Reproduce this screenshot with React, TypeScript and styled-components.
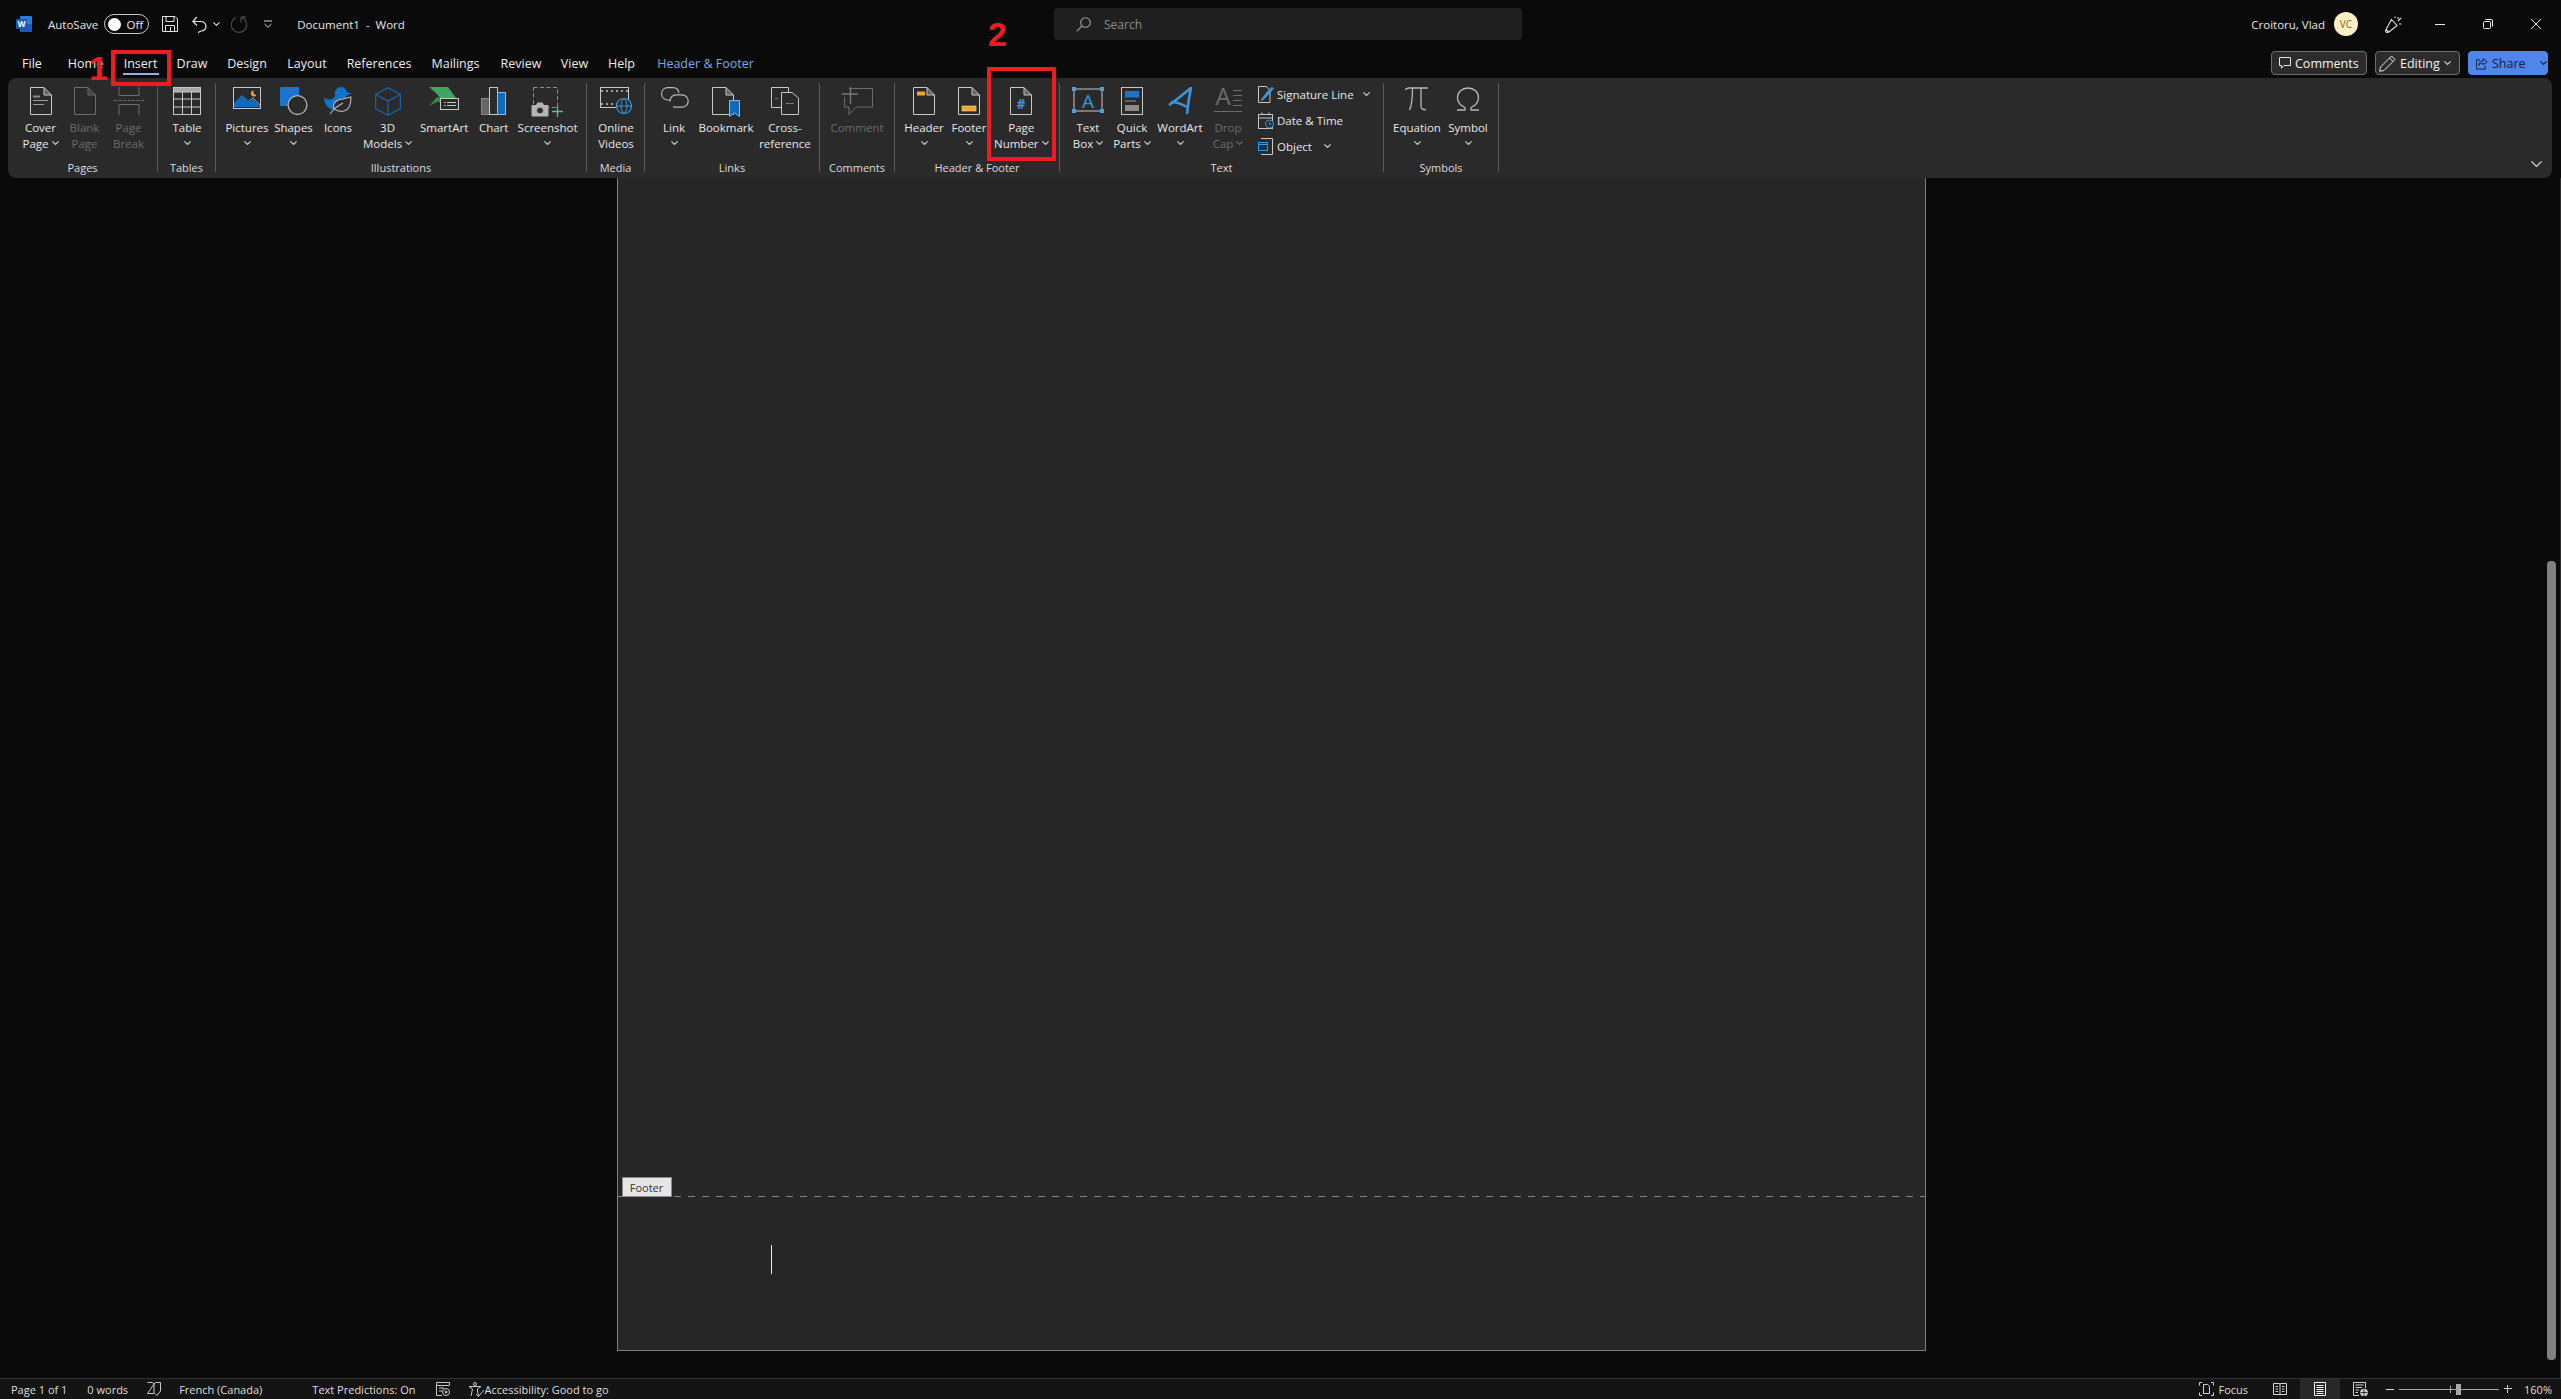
import React from 'react'
import styled, { createGlobalStyle } from 'styled-components'

const GlobalStyle = createGlobalStyle`
	html, body {
		margin: 0;
		padding: 0;
		background: #0a0a0a;
	}
	* {
		box-sizing: border-box;
	}
	svg {
		display: block;
		flex: none;
	}
`

const Window = styled.div`
	position: relative;
	display: flex;
	flex-direction: column;
	width: 2561px;
	height: 1399px;
	overflow: hidden;
	background: #0a0a0a;
	color: #e8e8e8;
	font-family: 'Open Sans', 'Noto Sans', sans-serif;
	font-size: 11.5px;
`

const TitleBar = styled.div`
	display: flex;
	align-items: center;
	flex: 0 0 48px;
	height: 48px;
	padding-right: 20px;
`

const QuickAccess = styled.div`
	display: flex;
	align-items: center;
	flex: 0 0 1054px;
	padding-left: 16px;
`

const Gap = styled.span<{ $w: number }>`
	display: block;
	flex: 0 0 ${(p) => p.$w}px;
`

const TitleText = styled.span`
	font-size: 11.5px;
	color: #e6e6e6;
	white-space: pre;
`

const Toggle = styled.div`
	display: flex;
	align-items: center;
	justify-content: space-between;
	width: 45px;
	height: 20px;
	padding: 0 5px 0 3px;
	border: 1px solid #c8c8c8;
	border-radius: 10px;
	font-size: 11.5px;
`

const ToggleKnob = styled.span`
	display: block;
	width: 13px;
	height: 13px;
	border-radius: 50%;
	background: #fff;
`

const SearchBox = styled.div`
	display: flex;
	align-items: center;
	gap: 13px;
	width: 468px;
	height: 32px;
	padding-left: 22px;
	border-radius: 4px;
	background: #1f1f1f;
	color: #8c8c8c;
	font-size: 12px;
`

const AccountArea = styled.div`
	display: flex;
	align-items: center;
	margin-left: auto;
`

const Avatar = styled.div`
	display: flex;
	align-items: center;
	justify-content: center;
	width: 24px;
	height: 24px;
	border-radius: 50%;
	background: #fdeec6;
	color: #8a6a14;
	font-size: 10px;
`

const TabRow = styled.div`
	display: flex;
	align-items: center;
	flex: 0 0 30px;
	height: 30px;
	padding: 0 13px 0 10px;
`

const Tab = styled.div<{ $w: number; $active?: boolean; $accent?: boolean }>`
	position: relative;
	display: flex;
	align-items: center;
	justify-content: center;
	flex: 0 0 ${(p) => p.$w}px;
	height: 30px;
	font-size: 12.5px;
	color: ${(p) => (p.$accent ? '#7ea6ea' : '#ececec')};
	white-space: nowrap;

	&::after {
		content: '';
		display: ${(p) => (p.$active ? 'block' : 'none')};
		position: absolute;
		left: 6px;
		right: 5px;
		bottom: 3px;
		height: 2px;
		background: #8fb0ea;
	}
`

const TabActions = styled.div`
	display: flex;
	align-items: center;
	gap: 8px;
	margin-left: auto;
`

const ActionButton = styled.div<{ $w: number; $pad: number; $primary?: boolean }>`
	display: flex;
	align-items: center;
	gap: 4px;
	width: ${(p) => p.$w}px;
	height: 24px;
	padding-left: ${(p) => p.$pad}px;
	border: 1px solid ${(p) => (p.$primary ? '#4f86e8' : '#6e6e6e')};
	border-radius: 4px;
	background: ${(p) => (p.$primary ? '#4f86e8' : '#2b2b2b')};
	color: ${(p) => (p.$primary ? '#10203f' : '#f4f4f4')};
	font-size: 12.5px;
`

const Ribbon = styled.div`
	position: relative;
	display: flex;
	flex: 0 0 100px;
	height: 100px;
	margin: 0 9px 0 8px;
	padding-top: 5px;
	border-radius: 8px;
	background: #2a2a2a;
`

const Group = styled.div<{ $w: number; $pad: number }>`
	display: flex;
	flex-direction: column;
	flex: 0 0 ${(p) => p.$w}px;
	height: 89px;
	padding-left: ${(p) => p.$pad}px;
	border-right: 1px solid #5a5a5a;
`

const GroupBody = styled.div`
	display: flex;
	flex: 0 0 77px;
	height: 77px;
`

const GroupLabel = styled.div<{ $pad: number }>`
	margin-left: -${(p) => p.$pad}px;
	line-height: 15px;
	text-align: center;
	font-size: 11px;
	color: #dcdcdc;
	white-space: nowrap;
`

const Btn = styled.div<{ $w: number; $disabled?: boolean }>`
	display: flex;
	flex-direction: column;
	align-items: center;
	flex: 0 0 ${(p) => p.$w}px;
	padding-top: 4px;
	color: ${(p) => (p.$disabled ? '#6c6c6c' : '#e8e8e8')};
`

const IconSlot = styled.div`
	display: flex;
	align-items: flex-start;
	justify-content: center;
	height: 29px;
	margin-bottom: 3px;
`

const BtnLine = styled.div`
	display: flex;
	align-items: center;
	justify-content: center;
	gap: 3px;
	height: 16px;
	white-space: nowrap;
`

const SmallStack = styled.div`
	display: flex;
	flex-direction: column;
	margin-top: -2px;
	margin-left: 6px;
`

const SmallRow = styled.div<{ $w: number }>`
	display: flex;
	align-items: center;
	gap: 3px;
	width: ${(p) => p.$w}px;
	height: 26px;
	white-space: nowrap;
`

const SmallChevron = styled.span<{ $gap: number }>`
	display: block;
	margin-left: ${(p) => p.$gap}px;
`

const Collapse = styled.div`
	position: absolute;
	right: 10px;
	bottom: 11px;
`

const DocArea = styled.div`
	position: relative;
	display: flex;
	justify-content: center;
	flex: 1;
	min-height: 0;
	padding: 0 19px 27px 0;
`

const Page = styled.div`
	display: flex;
	flex-direction: column;
	justify-content: flex-end;
	width: 1309px;
	border: 1px solid #7e7e7e;
	border-top: none;
	background: #262626;
`

const FooterZone = styled.div`
	position: relative;
	height: 154px;
	padding: 49px 0 0 153px;
	background: repeating-linear-gradient(90deg, #858585 0 7px, transparent 7px 14px) top / 100% 1px no-repeat;
`

const FooterTag = styled.div`
	position: absolute;
	left: 4px;
	top: -19px;
	display: flex;
	align-items: center;
	justify-content: center;
	width: 50px;
	height: 20px;
	border: 1px solid #8a8a8a;
	background: #e6e6e6;
	color: #333;
	font-size: 11px;
`

const Caret = styled.div`
	width: 1px;
	height: 29px;
	background: #e8e8e8;
`

const ScrollThumb = styled.div`
	position: absolute;
	right: 5px;
	top: 383px;
	width: 9px;
	height: 799px;
	border-radius: 4px;
	background: #808080;
`

const ScrollEdge = styled.div`
	position: absolute;
	right: 0;
	top: 0;
	bottom: 0;
	width: 1px;
	background: #2e2e2e;
`

const StatusBar = styled.div`
	display: flex;
	align-items: center;
	flex: 0 0 21px;
	height: 21px;
	padding: 0 9px 0 11px;
	border-top: 1px solid #303030;
	background: #141414;
	color: #dedede;
	font-size: 11px;
	white-space: nowrap;
`

const StatusRight = styled.div`
	display: flex;
	align-items: center;
	height: 100%;
	margin-left: auto;
`

const ViewButton = styled.div<{ $active?: boolean }>`
	display: flex;
	align-items: center;
	justify-content: center;
	width: 40px;
	height: 100%;
	background: ${(p) => (p.$active ? '#282828' : 'transparent')};
`

const ZoomTrack = styled.div`
	position: relative;
	width: 100px;
	height: 1px;
	background: #a8a8a8;
`

const ZoomTick = styled.span`
	position: absolute;
	left: 51px;
	top: -3px;
	width: 1px;
	height: 7px;
	background: #a8a8a8;
`

const ZoomThumb = styled.span`
	position: absolute;
	left: 57px;
	top: -5px;
	width: 5px;
	height: 11px;
	background: #a8a8a8;
`

const RedBox = styled.div<{ $l: number; $t: number; $w: number; $h: number }>`
	position: absolute;
	left: ${(p) => p.$l}px;
	top: ${(p) => p.$t}px;
	width: ${(p) => p.$w}px;
	height: ${(p) => p.$h}px;
	border: 4px solid #ed1c24;
`

const RedNumber = styled.div<{ $l: number; $t: number }>`
	position: absolute;
	left: ${(p) => p.$l}px;
	top: ${(p) => p.$t}px;
	font-family: 'Liberation Sans', Arial, sans-serif;
	font-size: 34px;
	font-weight: 700;
	line-height: 34px;
	color: #ed1c24;
`

const LINE = '#c8c8c8'
const DIM = '#6c6c6c'
const BLUE = '#0f6cbd'
const SKY = '#3a96dd'
const ORANGE = '#eda53a'

const Chevron = ({ color = '#d8d8d8' }: { color?: string }) => (
	<svg width="7" height="4" viewBox="0 0 7 4" fill="none" stroke={color} strokeWidth="1.1">
		<path d="M.4.4 3.5 3.4 6.6.4" />
	</svg>
)

const Sheet = ({ color = LINE, children }: { color?: string; children?: React.ReactNode }) => (
	<svg width="22" height="28" viewBox="0 0 22 28" fill="none" stroke={color} strokeWidth="1">
		<path d="M.5.5H14L21.5 8V27.5H.5Z" />
		<path d="M14 .5V8H21.5" fill={color} fillOpacity=".35" />
		{children}
	</svg>
)

const CoverIcon = () => (
	<Sheet>
		<path d="M3 9.5H10" strokeWidth="2" stroke="#8a8a8a" />
		<path d="M3 13.5H18M3 17.5H14" stroke="#9a9a9a" />
	</Sheet>
)

const PageBreakIcon = () => (
	<svg width="30" height="28" viewBox="0 0 30 28" fill="none" stroke={DIM} strokeWidth="1">
		<path d="M5 0V8.5H25V0M5 28V17.5H25V28" />
		<path d="M0 13.5H30" strokeDasharray="3 1.5" />
	</svg>
)

const TableIcon = () => (
	<svg width="28" height="28" viewBox="0 0 28 28" fill="none" stroke={LINE} strokeWidth="1">
		<rect x=".5" y=".5" width="27" height="27" />
		<rect x=".5" y=".5" width="27" height="4.5" fill="#a8a8a8" />
		<path d="M9.5 5V27M18.5 5V27M1 12H27M1 20H27" />
	</svg>
)

const PicturesIcon = () => (
	<svg width="28" height="22" viewBox="0 0 28 22">
		<rect x=".5" y=".5" width="27" height="21" fill="#2a2a2a" stroke={LINE} />
		<path d="M1 20V16L9 8 17 15 20 12 27 19V20Z" fill={BLUE} />
		<path d="M16 14 20 11 27 18" fill="none" stroke="#9cc5e8" strokeWidth=".8" />
		<path d="M21 3.5A3 3 0 1 0 23.5 8 2.8 2.8 0 0 1 21 3.5Z" fill={ORANGE} />
	</svg>
)

const ShapesIcon = () => (
	<svg width="28" height="28" viewBox="0 0 28 28">
		<rect width="19" height="19" rx="1" fill="#1b75d0" />
		<circle cx="17.5" cy="18" r="9.4" fill="#2a2a2a" stroke="#b4b4b4" strokeWidth="1.3" />
	</svg>
)

const DuckIcon = () => (
	<svg width="28" height="28" viewBox="0 0 28 28">
		<path
			d="M0 10C3 13 6 13 9 11.5 10 11 11 10 11 8 10 4 13 0 17 0 20 0 22 2 23 5L27.5 6.5 22 9C22 12 23 14 23 17L10 23C4 22 0 17 0 10Z"
			fill="#1372c9"
		/>
		<path
			d="M6 27 11 21M10 22C8 16 13 12 19 12L27 10C27 17 25 23 20 24 16 25 13 24 10 22ZM11 21 19 16"
			fill="#2a2a2a"
			stroke="#b8b8b8"
			strokeWidth="1.1"
		/>
	</svg>
)

const CubeIcon = () => (
	<svg width="26" height="29" viewBox="0 0 26 29" fill="none" stroke="#1668b4" strokeWidth="1.2">
		<path d="M13 .7 25.3 7.3V21.7L13 28.3.7 21.7V7.3Z" />
		<path d="M.7 7.3 13 14 25.3 7.3M13 14V28.3" />
	</svg>
)

const SmartArtIcon = () => (
	<svg width="30" height="23" viewBox="0 0 30 23">
		<path d="M0 0H19L27 11H11L8 7Z" fill="#3fa65f" />
		<path d="M8 10 11 11H27L22 15H8L0 19Z" fill="#2c8a4b" />
		<rect x="11.5" y="11.5" width="18" height="11" fill="#2a2a2a" stroke={LINE} />
		<path d="M15 15.5H16.5M18 15.5H27M15 18.5H16.5M18 18.5H27" stroke={LINE} />
	</svg>
)

const ChartIcon = () => (
	<svg width="25" height="28" viewBox="0 0 25 28" stroke={LINE}>
		<rect x=".5" y="11.5" width="8" height="16" fill="#666" stroke="#888" />
		<rect x="8.5" y=".5" width="8" height="27" fill="#2a2a2a" />
		<rect x="16.5" y="5.5" width="8" height="22" fill={BLUE} stroke="#8dbce6" />
	</svg>
)

const ScreenshotIcon = () => (
	<svg width="33" height="30" viewBox="0 0 33 30" fill="none">
		<rect x="2.5" y=".5" width="24" height="20" stroke="#8e8e8e" strokeDasharray="4 2.5" />
		<rect x=".5" y="18" width="17" height="11.5" rx="1" fill="#b4b4b4" />
		<path d="M5 18 6.5 15.5H11.5L13 18Z" fill="#b4b4b4" />
		<circle cx="9" cy="23.5" r="3.4" fill="#2a2a2a" stroke="#b4b4b4" />
		<path d="M21 24.5H32M26.5 19V30" stroke="#5fbf7d" strokeWidth="1.3" />
	</svg>
)

const VideoIcon = () => (
	<svg width="32" height="27" viewBox="0 0 32 27" fill="none">
		<rect x=".5" y=".5" width="28" height="20" stroke={LINE} />
		<path d="M1 4H28M1 17H28" stroke={LINE} strokeDasharray="2 3" strokeWidth="1.5" />
		<circle cx="24" cy="19" r="7.5" fill="#2a2a2a" stroke={SKY} strokeWidth="1.2" />
		<path d="M16.5 19H31.5M24 11.5C20 15 20 23 24 26.5 28 23 28 15 24 11.5Z" stroke={SKY} />
	</svg>
)

const LinkIcon = () => (
	<svg width="29" height="21" viewBox="0 0 29 21" fill="none" stroke="#b8b8b8" strokeWidth="1.2">
		<path d="M11 13H7A6.2 6.2 0 0 1 7 .7H13A6.2 6.2 0 0 1 19 6" />
		<path d="M10 14.5A6.2 6.2 0 0 1 16 7.8H22A6.2 6.2 0 0 1 22 20.2H16A6.2 6.2 0 0 1 13 19.4" />
	</svg>
)

const BookmarkIcon = () => (
	<svg width="28" height="30" viewBox="0 0 28 30" fill="none" stroke={LINE}>
		<path d="M.5.5H14L21.5 8V27.5H.5Z" />
		<path d="M14 .5V8H21.5" fill={LINE} fillOpacity=".35" />
		<path d="M17.5 13.5H27.5V29.5L22.5 26 17.5 29.5Z" fill={BLUE} stroke="#86bbe6" />
	</svg>
)

const CrossRefIcon = () => (
	<svg width="28" height="28" viewBox="0 0 28 28" fill="none" stroke={LINE}>
		<path d="M.5.5H17.5V5.5M10 20.5H.5V.5" />
		<path d="M10.5 5.5H21L27.5 11V27.5H10.5Z" fill="#2a2a2a" />
		<path d="M4 11.5H7M15 16.5H23" stroke="#e0504c" strokeWidth="1.2" />
	</svg>
)

const CommentIcon = () => (
	<svg width="31" height="29" viewBox="0 0 31 29" fill="none" stroke={DIM}>
		<path d="M7 1.5H30.5V20H14L7 27.5V20H2.5V10" />
		<path d="M8.5 0V17M0 7H16" strokeWidth="1.4" stroke="#777" />
	</svg>
)

const HeaderIcon = () => (
	<Sheet>
		<rect x="4" y="4.5" width="8" height="4" fill={ORANGE} stroke="none" />
	</Sheet>
)

const FooterIcon = () => (
	<Sheet>
		<rect x="4" y="19" width="14" height="5" fill={ORANGE} stroke="#f4dcae" strokeWidth=".6" />
	</Sheet>
)

const PageNumberIcon = () => (
	<Sheet>
		<text x="11" y="22" textAnchor="middle" fontSize="14" fontWeight="700" fill={SKY} stroke="none" fontFamily="'Open Sans', sans-serif">
			#
		</text>
	</Sheet>
)

const TextBoxIcon = () => (
	<svg width="32" height="26" viewBox="0 0 32 26" fill="none">
		<rect x="2" y="2" width="28" height="22" stroke={LINE} />
		<text x="16" y="21" textAnchor="middle" fontSize="19" fill={SKY} fontFamily="'Open Sans', sans-serif">
			A
		</text>
		<path d="M0 0H4V4H0ZM28 0H32V4H28ZM0 22H4V26H0ZM28 22H32V26H28Z" fill="#4a9fe0" />
	</svg>
)

const QuickPartsIcon = () => (
	<svg width="22" height="28" viewBox="0 0 22 28" fill="none">
		<rect x=".5" y=".5" width="21" height="27" stroke={LINE} />
		<rect x="4" y="4" width="14" height="6.5" fill="#1b75d0" />
		<path d="M4 14H15" stroke="#9a9a9a" />
		<rect x="4" y="18" width="14" height="6" fill="#8a8a8a" />
	</svg>
)

const WordArtIcon = () => (
	<svg width="24" height="28" viewBox="0 0 24 28" fill="none" stroke="#3a96dd" strokeWidth="2.6">
		<path d="M1 18C8 14 15 7 23 1 21 9 20 18 19 27" />
		<path d="M3 15C8 15 14 17 19 20" />
	</svg>
)

const DropCapIcon = () => (
	<svg width="29" height="26" viewBox="0 0 29 26" fill="none" stroke={DIM}>
		<text x="9" y="18" textAnchor="middle" fontSize="24" fill={DIM} stroke="none" fontFamily="'Open Sans', sans-serif">
			A
		</text>
		<path d="M19 3.5H28M19 8.5H28M19 13.5H28M19 18.5H28M0 24.5H28" />
	</svg>
)

const SignatureIcon = () => (
	<svg width="16" height="17" viewBox="0 0 16 17" fill="none" stroke={LINE}>
		<path d="M.5.5H8L12 4V16.5H.5Z" />
		<path d="M3 14 9 6 14 1 15.5 2.5 10.5 8.5 4 15Z" fill={SKY} stroke={SKY} strokeWidth=".6" />
	</svg>
)

const CalendarIcon = () => (
	<svg width="16" height="17" viewBox="0 0 16 17" fill="none" stroke={LINE}>
		<rect x=".5" y="2.5" width="14" height="14" />
		<path d="M1 6H14M4 .5V3M11 .5V3" />
		<circle cx="11.5" cy="12" r="4" fill="#2a2a2a" stroke={SKY} />
		<path d="M11.5 10V12.3H13.5" stroke={SKY} />
	</svg>
)

const ObjectIcon = () => (
	<svg width="16" height="17" viewBox="0 0 16 17" fill="none" stroke={LINE}>
		<path d="M3 .5H14.5V16.5H3" />
		<rect x=".5" y="4.5" width="9" height="8" stroke={SKY} fill="#2a2a2a" />
		<path d="M1 6.5H9" stroke={SKY} />
	</svg>
)

const EquationIcon = () => (
	<svg width="24" height="24" viewBox="0 0 24 24" fill="none" stroke="#b8b8b8" strokeWidth="1.3">
		<path d="M0 3C1 1.5 2 1 4 1H23" />
		<path d="M7.5 1C7.5 10 7 18 4.5 23M16 1V19C16 21.5 17.5 23 21 22.5" />
	</svg>
)

const SymbolIcon = () => (
	<svg width="24" height="24" viewBox="0 0 24 24" fill="none" stroke="#b8b8b8" strokeWidth="1.3">
		<path d="M1 23H9V20.5C4.5 18.5 1.5 15 1.5 10.5 1.5 5 6 1 12 1S22.5 5 22.5 10.5C22.5 15 19.5 18.5 15 20.5V23H23" />
	</svg>
)

interface RibbonButtonProps {
	w: number
	icon: React.ReactNode
	top: string
	bottom?: string
	chevron?: boolean
	disabled?: boolean
}

const RibbonButton: React.FC<RibbonButtonProps> = ({ w, icon, top, bottom, chevron, disabled }) => (
	<Btn $w={w} $disabled={disabled}>
		<IconSlot>{icon}</IconSlot>
		<BtnLine>{top}</BtnLine>
		<BtnLine>
			{bottom}
			{chevron && <Chevron color={disabled ? DIM : '#d8d8d8'} />}
		</BtnLine>
	</Btn>
)

interface RibbonGroupProps {
	w: number
	pad: number
	label: string
	children: React.ReactNode
}

const RibbonGroup: React.FC<RibbonGroupProps> = ({ w, pad, label, children }) => (
	<Group $w={w} $pad={pad}>
		<GroupBody>{children}</GroupBody>
		<GroupLabel $pad={pad}>{label}</GroupLabel>
	</Group>
)

const tabs = [
	{ label: 'File', w: 44 },
	{ label: 'Home', w: 63 },
	{ label: 'Insert', w: 47, active: true },
	{ label: 'Draw', w: 56 },
	{ label: 'Design', w: 54 },
	{ label: 'Layout', w: 66 },
	{ label: 'References', w: 78 },
	{ label: 'Mailings', w: 75 },
	{ label: 'Review', w: 56 },
	{ label: 'View', w: 51 },
	{ label: 'Help', w: 43 },
	{ label: 'Header & Footer', w: 125, accent: true },
]

const App = () => {
	return (
		<Window>
			<GlobalStyle />
			<TitleBar>
				<QuickAccess>
					<svg width="16" height="16" viewBox="0 0 16 16">
						<rect x="4" width="12" height="16" rx="1" fill="#2b7cd3" />
						<rect x="4" y="8" width="12" height="8" rx="1" fill="#185abd" />
						<rect y="3" width="11" height="10" rx="1" fill="#1a5bb8" />
						<text x="5.5" y="11" textAnchor="middle" fontSize="8" fontWeight="700" fill="#fff" fontFamily="'Open Sans', sans-serif">
							W
						</text>
					</svg>
					<Gap $w={16} />
					<TitleText>AutoSave</TitleText>
					<Gap $w={6} />
					<Toggle>
						<ToggleKnob />
						Off
					</Toggle>
					<Gap $w={13} />
					<svg width="16" height="16" viewBox="0 0 16 16" fill="none" stroke="#e4e4e4">
						<path d="M.5.5H13L15.5 3V15.5H.5Z" />
						<path d="M4 .5V5.5H12V.5M3.5 15.5V9.5H12.5V15.5M8.5 11V15" />
					</svg>
					<Gap $w={14} />
					<svg width="15" height="17" viewBox="0 0 15 17" fill="none" stroke="#e4e4e4" strokeWidth="1.2">
						<path d="M1 5.5H9.5A4.6 4.6 0 0 1 9 15L6 16.5M4.8 1 .9 5.5 5 9.5" />
					</svg>
					<Gap $w={6} />
					<Chevron />
					<Gap $w={11} />
					<svg width="17" height="17" viewBox="0 0 17 17" fill="none" stroke="#4a4a4a" strokeWidth="1.2">
						<path d="M10 1.2A7.7 7.7 0 1 1 5 1.5M10 1V6.5M10 1.2 15 .8" />
					</svg>
					<Gap $w={16} />
					<svg width="8" height="8" viewBox="0 0 8 8" fill="none" stroke="#dcdcdc">
						<path d="M0 1H8M.5 4 4 7.3 7.5 4" />
					</svg>
					<Gap $w={25} />
					<TitleText>Document1  -  Word</TitleText>
				</QuickAccess>
				<SearchBox>
					<svg width="15" height="15" viewBox="0 0 15 15" fill="none" stroke="#a0a0a0" strokeWidth="1.1">
						<circle cx="9.5" cy="5.5" r="4.8" />
						<path d="M6 9 .7 14.3" />
					</svg>
					Search
				</SearchBox>
				<AccountArea>
					<TitleText>Croitoru, Vlad</TitleText>
					<Gap $w={9} />
					<Avatar>VC</Avatar>
					<Gap $w={27} />
					<svg width="17" height="17" viewBox="0 0 17 17" fill="none" stroke="#e4e4e4" strokeWidth="1.1">
						<path d="M6.5 3.5 12 9.5 4 16 1 13.5ZM4 16 1.5 16.5.5 15 1 13.5" />
						<path d="M10 2V.5M13 5 16 2M14 8H16.5M13 1V3" />
					</svg>
					<Gap $w={33} />
					<svg width="10" height="1" viewBox="0 0 10 1">
						<rect width="10" height="1" fill="#e8e8e8" />
					</svg>
					<Gap $w={38} />
					<svg width="10" height="10" viewBox="0 0 10 10" fill="none" stroke="#e8e8e8">
						<rect x=".5" y="2.5" width="7" height="7" rx="1" />
						<path d="M2.5 .5H8A1.5 1.5 0 0 1 9.5 2V7.5" />
					</svg>
					<Gap $w={38} />
					<svg width="10" height="10" viewBox="0 0 10 10" fill="none" stroke="#e8e8e8">
						<path d="M0 0 10 10M10 0 0 10" />
					</svg>
				</AccountArea>
			</TitleBar>

			<TabRow>
				{tabs.map((t) => (
					<Tab key={t.label} $w={t.w} $active={t.active} $accent={t.accent}>
						{t.label}
					</Tab>
				))}
				<TabActions>
					<ActionButton $w={96} $pad={7}>
						<svg width="12" height="12" viewBox="0 0 12 12" fill="none" stroke="#e4e4e4">
							<path d="M.5.5H11.5V8.5H5L2.5 11.2V8.5H.5Z" />
						</svg>
						Comments
					</ActionButton>
					<ActionButton $w={85} $pad={3}>
						<svg width="17" height="17" viewBox="0 0 17 17" fill="none" stroke="#e4e4e4">
							<path d="M12.5 1 16 4.5 5 15.5.7 16.3 1.5 12ZM10.5 3 14 6.5" />
						</svg>
						Editing
						<Chevron />
					</ActionButton>
					<ActionButton $w={80} $pad={7} $primary>
						<svg width="12" height="13" viewBox="0 0 15 15" fill="none" stroke="#10203f" strokeWidth="1.2">
							<path d="M9 1.5 14 5.5 9 9V7C6 7 4.5 8 3.5 10 3.5 6.5 5.5 4 9 4Z" />
							<path d="M5 3H.5V14.5H11.5V10" />
						</svg>
						Share
						<Gap $w={6} />
						<Chevron color="#10203f" />
					</ActionButton>
				</TabActions>
			</TabRow>

			<Ribbon>
				<RibbonGroup w={150} pad={9} label="Pages">
					<RibbonButton w={47} icon={<CoverIcon />} top="Cover" bottom="Page" chevron />
					<RibbonButton w={41} icon={<Sheet color={DIM} />} top="Blank" bottom="Page" disabled />
					<RibbonButton w={47} icon={<PageBreakIcon />} top="Page" bottom="Break" disabled />
				</RibbonGroup>
				<RibbonGroup w={58} pad={4} label="Tables">
					<RibbonButton w={50} icon={<TableIcon />} top="Table" chevron />
				</RibbonGroup>
				<RibbonGroup w={371} pad={4} label="Illustrations">
					<RibbonButton w={54} icon={<PicturesIcon />} top="Pictures" chevron />
					<RibbonButton w={39} icon={<ShapesIcon />} top="Shapes" chevron />
					<RibbonButton w={50} icon={<DuckIcon />} top="Icons" />
					<RibbonButton w={48} icon={<CubeIcon />} top="3D" bottom="Models" chevron />
					<RibbonButton w={64} icon={<SmartArtIcon />} top="SmartArt" />
					<RibbonButton w={35} icon={<ChartIcon />} top="Chart" />
					<RibbonButton w={73} icon={<ScreenshotIcon />} top="Screenshot" chevron />
				</RibbonGroup>
				<RibbonGroup w={58} pad={4} label="Media">
					<RibbonButton w={50} icon={<VideoIcon />} top="Online" bottom="Videos" />
				</RibbonGroup>
				<RibbonGroup w={175} pad={9} label="Links">
					<RibbonButton w={40} icon={<LinkIcon />} top="Link" chevron />
					<RibbonButton w={64} icon={<BookmarkIcon />} top="Bookmark" />
					<RibbonButton w={54} icon={<CrossRefIcon />} top="Cross-" bottom="reference" />
				</RibbonGroup>
				<RibbonGroup w={75} pad={7} label="Comments">
					<RibbonButton w={60} icon={<CommentIcon />} top="Comment" disabled />
				</RibbonGroup>
				<RibbonGroup w={165} pad={9} label="Header & Footer">
					<RibbonButton w={40} icon={<HeaderIcon />} top="Header" chevron />
					<RibbonButton w={50} icon={<FooterIcon />} top="Footer" chevron />
					<RibbonButton w={52} icon={<PageNumberIcon />} top="Page" bottom="Number" chevron />
				</RibbonGroup>
				<RibbonGroup w={324} pad={8} label="Text">
					<RibbonButton w={40} icon={<TextBoxIcon />} top="Text" bottom="Box" chevron />
					<RibbonButton w={48} icon={<QuickPartsIcon />} top="Quick" bottom="Parts" chevron />
					<RibbonButton w={48} icon={<WordArtIcon />} top="WordArt" chevron />
					<RibbonButton w={48} icon={<DropCapIcon />} top="Drop" bottom="Cap" chevron disabled />
					<SmallStack>
						<SmallRow $w={118}>
							<SignatureIcon />
							Signature Line
							<SmallChevron $gap={6}>
								<Chevron />
							</SmallChevron>
						</SmallRow>
						<SmallRow $w={118}>
							<CalendarIcon />
							Date & Time
						</SmallRow>
						<SmallRow $w={118}>
							<ObjectIcon />
							Object
							<SmallChevron $gap={9}>
								<Chevron />
							</SmallChevron>
						</SmallRow>
					</SmallStack>
				</RibbonGroup>
				<RibbonGroup w={115} pad={8} label="Symbols">
					<RibbonButton w={50} icon={<EquationIcon />} top="Equation" chevron />
					<RibbonButton w={52} icon={<SymbolIcon />} top="Symbol" chevron />
				</RibbonGroup>
				<Collapse>
					<svg width="11" height="6" viewBox="0 0 11 6" fill="none" stroke="#e8e8e8" strokeWidth="1.1">
						<path d="M.4.4 5.5 5.4 10.6.4" />
					</svg>
				</Collapse>
			</Ribbon>

			<DocArea>
				<Page>
					<FooterZone>
						<FooterTag>Footer</FooterTag>
						<Caret />
					</FooterZone>
				</Page>
				<ScrollThumb />
				<ScrollEdge />
			</DocArea>

			<StatusBar>
				Page 1 of 1
				<Gap $w={20} />
				0 words
				<Gap $w={19} />
				<svg width="14" height="14" viewBox="0 0 14 14" fill="none" stroke="#c8c8c8">
					<path d="M.5.5H5.5L7 2 8.5.5H13.5V9L10 13.5 8 11.5M7 2V11.5H.5Z" />
				</svg>
				<Gap $w={18} />
				French (Canada)
				<Gap $w={50} />
				Text Predictions: On
				<Gap $w={20} />
				<svg width="14" height="14" viewBox="0 0 14 14" fill="none" stroke="#c8c8c8">
					<path d="M.5 .5H13.5V3.5H.5ZM.5 3.5V13.5H6M3 6H8M3 9H6" />
					<circle cx="10" cy="10" r="3.5" />
					<circle cx="10" cy="10" r="1" fill="#c8c8c8" />
				</svg>
				<Gap $w={18} />
				<svg width="17" height="15" viewBox="0 0 17 15" fill="none" stroke="#c8c8c8">
					<circle cx="7" cy="2" r="1.5" />
					<path d="M1 4.5H13L9.5 7V10L11 14M4.5 7 3 14M1 4.5 4.5 7M8 12 10.5 14.5 16 8" />
				</svg>
				Accessibility: Good to go
				<StatusRight>
					<svg width="15" height="14" viewBox="0 0 15 14" fill="none" stroke="#d0d0d0">
						<path d="M3 .5H.5V3.5M12 .5H14.5V3.5M.5 10.5V13.5H3M14.5 10.5V13.5H12" />
						<path d="M4.5 2.5H8.5L10.5 4.5V11.5H4.5Z" />
					</svg>
					<Gap $w={4} />
					Focus
					<Gap $w={12} />
					<ViewButton>
						<svg width="14" height="13" viewBox="0 0 14 13" fill="none" stroke="#d8d8d8">
							<path d="M.5.5H6.5L7 1 7.5.5H13.5V11.5H.5ZM7 1V12M2.5 3.5H5M2.5 6H5M2.5 8.5H5M9 3.5H11.5M9 6H11.5M9 8.5H11.5" />
						</svg>
					</ViewButton>
					<ViewButton $active>
						<svg width="12" height="14" viewBox="0 0 12 14" fill="none" stroke="#f0f0f0">
							<path d="M.5.5H11.5V13.5H.5ZM2.5 3.5H9.5M2.5 5.5H9.5M2.5 7.5H9.5M2.5 9.5H9.5M2.5 11.5H9.5" />
						</svg>
					</ViewButton>
					<ViewButton>
						<svg width="15" height="14" viewBox="0 0 15 14" fill="none" stroke="#d0d0d0">
							<path d="M6 13.5H.5V.5H12.5V6M2.5 3H10.5M2.5 5.5H9M2.5 8H6M2.5 10.5H5" />
							<circle cx="11" cy="10.5" r="3.5" fill="#d0d0d0" />
							<path d="M7.5 10.5H14.5M11 7V14" stroke="#141414" strokeWidth=".8" />
						</svg>
					</ViewButton>
					<Gap $w={6} />
					<svg width="8" height="1" viewBox="0 0 8 1">
						<rect width="8" height="1" fill="#d8d8d8" />
					</svg>
					<Gap $w={5} />
					<ZoomTrack>
						<ZoomTick />
						<ZoomThumb />
					</ZoomTrack>
					<Gap $w={5} />
					<svg width="8" height="8" viewBox="0 0 8 8" fill="none" stroke="#d8d8d8">
						<path d="M0 3.5H8M3.5 0V8" />
					</svg>
					<Gap $w={12} />
					160%
				</StatusRight>
			</StatusBar>

			<RedBox $l={111} $t={50} $w={60} $h={36} />
			<RedBox $l={987} $t={67} $w={69} $h={94} />
			<RedNumber $l={89} $t={51}>1</RedNumber>
			<RedNumber $l={988} $t={17}>2</RedNumber>
		</Window>
	)
}

export default App
